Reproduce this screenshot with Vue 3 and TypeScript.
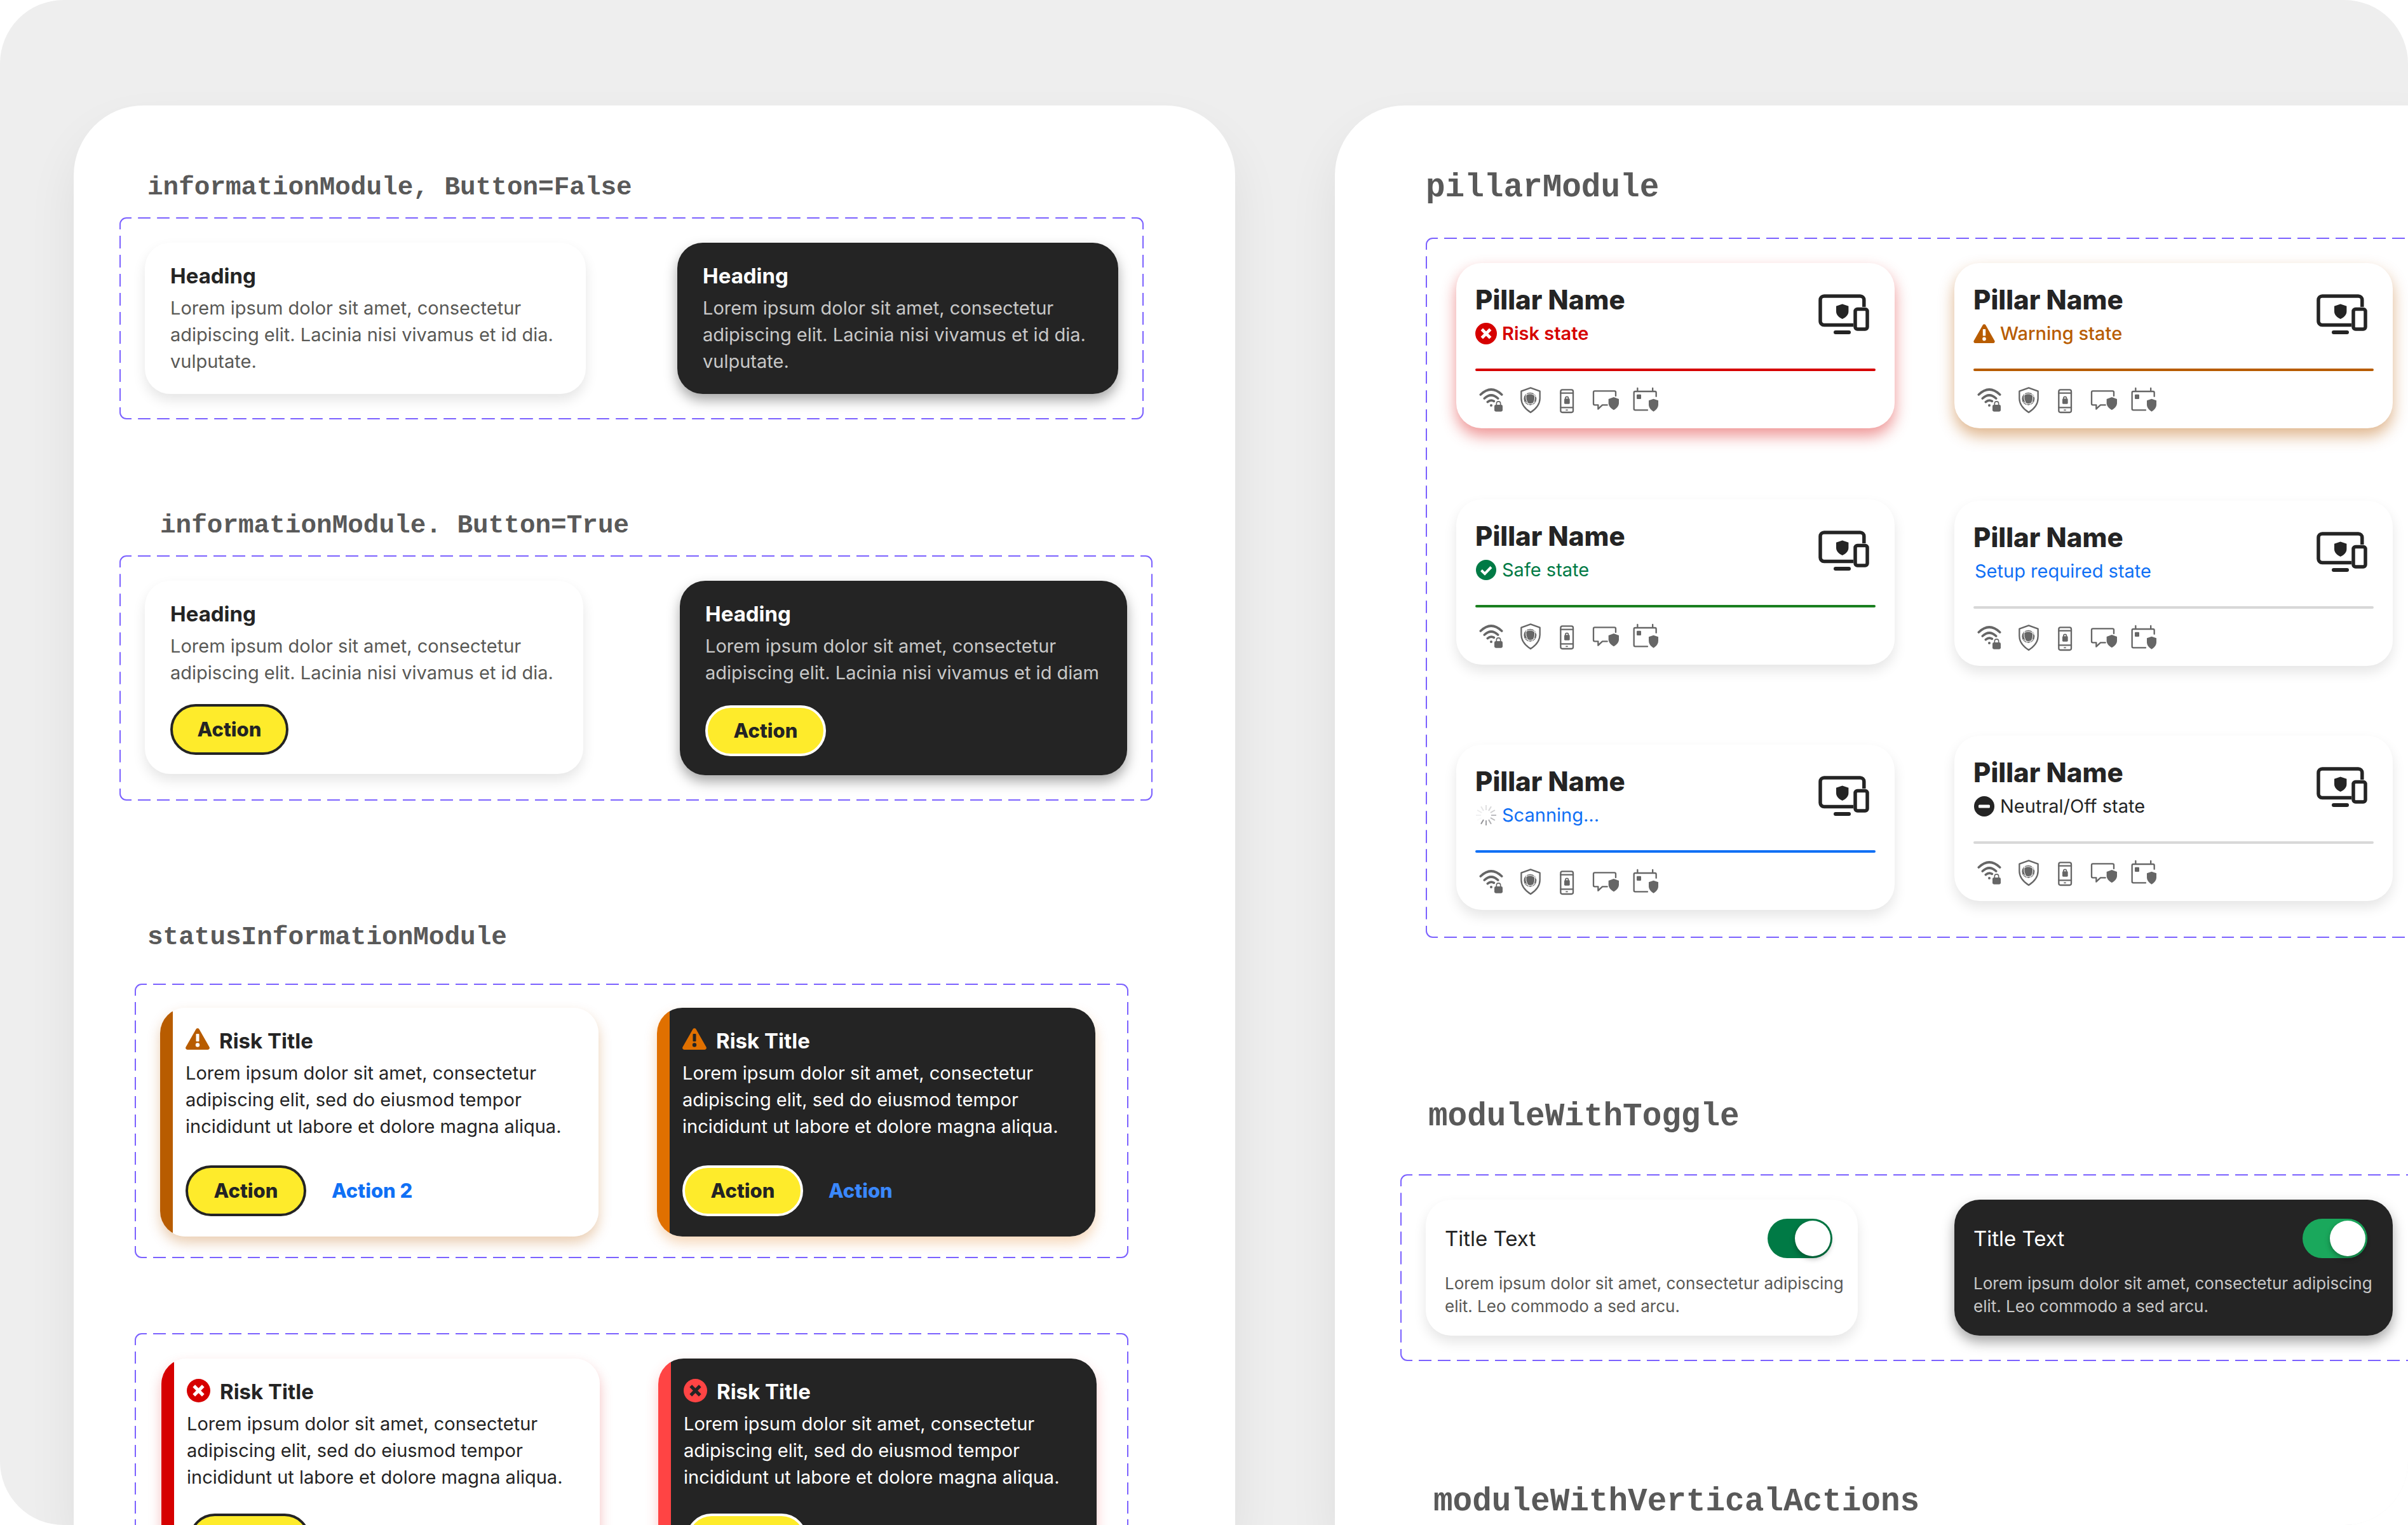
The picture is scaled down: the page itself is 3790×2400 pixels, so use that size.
<script setup lang="ts">
type Tone = 'light' | 'dark'
type PillarState = 'risk' | 'warning' | 'safe' | 'setup' | 'scanning' | 'neutral'

interface InfoCard { tone: Tone; text: string; action?: string }
interface StatusCard { tone: Tone; link: string }
interface Pillar { state: PillarState; label: string }

const plainCards: InfoCard[] = [
  { tone: 'light', text: 'Lorem ipsum dolor sit amet, consectetur\nadipiscing elit. Lacinia nisi vivamus et id dia.\nvulputate.' },
  { tone: 'dark', text: 'Lorem ipsum dolor sit amet, consectetur\nadipiscing elit. Lacinia nisi vivamus et id dia.\nvulputate.' },
]

const actionCards: InfoCard[] = [
  { tone: 'light', text: 'Lorem ipsum dolor sit amet, consectetur\nadipiscing elit. Lacinia nisi vivamus et id dia.', action: 'Action' },
  { tone: 'dark', text: 'Lorem ipsum dolor sit amet, consectetur\nadipiscing elit. Lacinia nisi vivamus et id diam', action: 'Action' },
]

const statusCards: StatusCard[] = [
  { tone: 'light', link: 'Action 2' },
  { tone: 'dark', link: 'Action' },
]

const statusKinds = ['warning', 'risk'] as const
const statusText = 'Lorem ipsum dolor sit amet, consectetur\nadipiscing elit, sed do eiusmod tempor\nincididunt ut labore et dolore magna aliqua.'

const pillarColumns: Pillar[][] = [
  [
    { state: 'risk', label: 'Risk state' },
    { state: 'safe', label: 'Safe state' },
    { state: 'scanning', label: 'Scanning...' },
  ],
  [
    { state: 'warning', label: 'Warning state' },
    { state: 'setup', label: 'Setup required state' },
    { state: 'neutral', label: 'Neutral/Off state' },
  ],
]

const toggleTones: Tone[] = ['light', 'dark']
const toggleText = 'Lorem ipsum dolor sit amet, consectetur adipiscing\nelit. Leo commodo a sed arcu.'

// Spoke opacities, clockwise from twelve o'clock
const spokes = [0.16, 0.2, 0.26, 0.34, 0.36, 0.42, 0.5, 0.55, 0.03, 0.07, 0.1, 0.13]
</script>

<template>
  <main class="board">
    <section class="panel panel-info">
      <h2 class="label">informationModule, Button=False</h2>
      <div class="frame frame-plain">
        <article v-for="card in plainCards" :key="card.tone" class="card info" :class="card.tone">
          <h3 class="card-title">Heading</h3>
          <p class="card-text">{{ card.text }}</p>
        </article>
      </div>

      <h2 class="label label-true">informationModule. Button=True</h2>
      <div class="frame frame-action">
        <article v-for="card in actionCards" :key="card.tone" class="card info with-action" :class="card.tone">
          <h3 class="card-title">Heading</h3>
          <p class="card-text">{{ card.text }}</p>
          <button type="button" class="pill">{{ card.action }}</button>
        </article>
      </div>

      <h2 class="label label-status">statusInformationModule</h2>
      <div v-for="kind in statusKinds" :key="kind" class="frame frame-status" :class="'frame-' + kind">
        <article v-for="card in statusCards" :key="card.tone" class="card status" :class="[card.tone, kind]">
          <h3 class="card-title">
            <svg v-if="kind === 'warning'" class="mark" width="38" height="34" viewBox="0 0 38 34" aria-hidden="true">
              <path class="solid" d="M16.6 1.5a2.8 2.8 0 0 1 4.8 0L37.5 29.8a2.8 2.8 0 0 1-2.4 4.2H2.9a2.8 2.8 0 0 1-2.4-4.2z" />
              <rect class="cut" x="16.5" y="9" width="5" height="12" rx="1" />
              <circle class="cut" cx="19" cy="26.5" r="3.2" />
            </svg>
            <svg v-else class="mark" width="37" height="37" viewBox="0 0 38 38" aria-hidden="true">
              <circle class="solid" cx="19" cy="19" r="19" />
              <path class="cut-line" d="M11.5 11.5l15 15M26.5 11.5l-15 15" />
            </svg>
            <span>Risk Title</span>
          </h3>
          <p class="card-text">{{ statusText }}</p>
          <div class="actions">
            <button type="button" class="pill">Action</button>
            <a href="#" class="text-link">{{ card.link }}</a>
          </div>
        </article>
      </div>
    </section>

    <section class="panel panel-pillars">
      <h2 class="label label-large">pillarModule</h2>
      <div class="frame frame-pillars">
        <div v-for="(column, c) in pillarColumns" :key="c" class="pillar-column">
          <article v-for="pillar in column" :key="pillar.state" class="card pillar" :class="pillar.state">
            <header class="pillar-head">
              <div>
                <h3 class="pillar-name">Pillar Name</h3>
                <p class="state">
                  <svg v-if="pillar.state === 'risk'" class="state-icon" width="34" height="34" viewBox="0 0 38 38" aria-hidden="true">
                    <circle class="solid" cx="19" cy="19" r="19" />
                    <path class="cut-line" d="M11.5 11.5l15 15M26.5 11.5l-15 15" />
                  </svg>
                  <svg v-else-if="pillar.state === 'warning'" class="state-icon" width="34" height="30" viewBox="0 0 38 34" aria-hidden="true">
                    <path class="solid" d="M16.6 1.5a2.8 2.8 0 0 1 4.8 0L37.5 29.8a2.8 2.8 0 0 1-2.4 4.2H2.9a2.8 2.8 0 0 1-2.4-4.2z" />
                    <rect class="cut" x="16.5" y="9" width="5" height="12" rx="1" />
                    <circle class="cut" cx="19" cy="26.5" r="3.2" />
                  </svg>
                  <svg v-else-if="pillar.state === 'safe'" class="state-icon" width="34" height="34" viewBox="0 0 34 34" aria-hidden="true">
                    <circle class="solid" cx="17" cy="17" r="16" />
                    <path class="check" d="M9.5 17.5l5.5 5.5 10-10.5" />
                  </svg>
                  <svg v-else-if="pillar.state === 'scanning'" class="state-icon" width="34" height="34" viewBox="0 0 34 34" aria-hidden="true">
                    <line
                      v-for="(opacity, i) in spokes"
                      :key="i"
                      class="spoke"
                      x1="17"
                      y1="1"
                      x2="17"
                      y2="9"
                      :stroke-opacity="opacity"
                      :transform="`rotate(${i * 30} 17 17)`"
                    />
                  </svg>
                  <svg v-else-if="pillar.state === 'neutral'" class="state-icon" width="34" height="34" viewBox="0 0 34 34" aria-hidden="true">
                    <circle class="solid" cx="17" cy="17" r="16" />
                    <rect class="cut" x="8" y="14.5" width="18" height="5" rx="1.5" />
                  </svg>
                  <span>{{ pillar.label }}</span>
                </p>
              </div>
              <svg class="devices" width="80" height="64" viewBox="0 0 80 64" aria-hidden="true">
                <path class="device-line" d="M71.8 20V9a6 6 0 0 0-6-6H9a6 6 0 0 0-6 6v33.500a6 6 0 0 0 6 6h46" />
                <rect class="device-line" x="58" y="23.500" width="19" height="31.500" rx="3.500" />
                <rect class="ink" x="24" y="57" width="27" height="6" rx="3" />
                <path class="ink" d="M37.700 15.500l9.700 3.200v8.300c0 6-4.500 9.500-9.700 12-5.200-2.500-9.700-6-9.700-12v-8.300z" />
              </svg>
            </header>
            <hr class="rule" />
            <div class="features">
              <svg class="feature" viewBox="33 36 150 132" aria-hidden="true">
                <path class="wave" d="M58 78Q108 30 158 78M76 96Q108 66 140 96M91 113Q106 100 121 109" />
                <circle class="grey" cx="108" cy="129" r="6" />
                <rect class="grey" x="123" y="126" width="39" height="32" rx="7" />
                <path class="thin" d="M133 128v-8a9.500 9.500 0 0 1 19 0v8" />
              </svg>
              <svg class="feature" viewBox="216 36 150 132" aria-hidden="true">
                <path class="outline" d="M294 46L250 62v34c0 32 22 52 44 66 22-14 44-34 44-66V62z" />
                <circle class="grey" cx="292" cy="98" r="30" />
                <path class="vein" d="M276 70Q264 100 288 129M272 80Q298 64 322 90M310 72Q322 104 298 129M268 112Q292 132 316 112" />
                <path class="grey" d="M296 80C306 87 311 98 307 107Q294 117 281 107C277 97 284 87 296 80z" />
              </svg>
              <svg class="feature" viewBox="399 36 150 132" aria-hidden="true">
                <rect class="outline" x="436" y="55" width="59" height="107" rx="8" />
                <path class="outline" d="M436 71h59M436 139h59" />
                <path class="thin" d="M460 151h10" />
                <rect class="grey" x="453" y="97" width="26" height="25" rx="4" />
                <path class="thin" d="M458.500 99v-4a7 7 0 0 1 14 0v4" />
              </svg>
              <svg class="feature" viewBox="582 36 150 132" aria-hidden="true">
                <path class="outline" d="M696 84V67a6 6 0 0 0-6-6h-93a6 6 0 0 0-6 6v54a6 6 0 0 0 6 6h16v19l20-19h23" />
                <path class="grey" d="M686.500 90l24.500 9v19c0 15-12 26-24.500 33-12.500-7-24.500-18-24.500-33V99z" />
              </svg>
              <svg class="feature" viewBox="765 36 150 132" aria-hidden="true">
                <path class="outline" d="M887 86V69a6 6 0 0 0-6-6h-93a6 6 0 0 0-6 6v76a6 6 0 0 0 6 6h58M799 48v14M870.500 48v14" />
                <rect class="grey" x="795" y="77" width="21" height="22" rx="4" />
                <path class="grey" d="M874.500 98l22.500 8v19c0 15-11 26-22.500 33-11.500-7-22.500-18-22.500-33v-19z" />
              </svg>
            </div>
          </article>
        </div>
      </div>

      <h2 class="label label-large label-toggle">moduleWithToggle</h2>
      <div class="frame frame-toggle">
        <article v-for="tone in toggleTones" :key="tone" class="card toggle" :class="tone">
          <div class="toggle-row">
            <label class="toggle-title" :for="'switch-' + tone">Title Text</label>
            <input :id="'switch-' + tone" class="switch" type="checkbox" role="switch" checked />
          </div>
          <p class="toggle-text">{{ toggleText }}</p>
        </article>
      </div>

      <h2 class="label label-large label-vertical">moduleWithVerticalActions</h2>
    </section>
  </main>
</template>

<style>
body {
  margin: 0;
  background: #fff;
}
</style>

<style scoped>
.board {
  box-sizing: border-box;
  display: flex;
  gap: 157px;
  height: 100vh;
  padding: 166px 0 0 116px;
  border-radius: 100px;
  overflow: hidden;
  background: #eee;
  color: #242424;
  font-family: Inter, "Liberation Sans", sans-serif;
}

.panel {
  box-sizing: border-box;
  min-width: 0;
  padding-top: 104px;
  border-radius: 110px 110px 0 0;
  background: #fff;
  box-shadow: 0 40px 80px rgba(0, 0, 0, 0.07);
}
/* The grow factors share what is left after the panels' side padding */
.panel-info {
  flex: 1756 1 0;
  padding-left: 72px;
}
.panel-pillars {
  flex: 1706 1 0;
  margin-right: -120px;
  padding-top: 100px;
  padding-left: 103px;
}

h2,
h3,
p {
  margin: 0;
}

.label {
  padding-left: 44px;
  color: #595959;
  font: 700 41px/50px "Liberation Mono", monospace;
  white-space: nowrap;
}
.label-true {
  margin-top: 142px;
  padding-left: 64px;
}
.label-status {
  margin-top: 190px;
}
.label-large {
  padding-left: 40px;
  font-size: 51px;
  line-height: 60px;
}
.label-toggle {
  margin-top: 252px;
  padding-left: 44px;
}
.label-vertical {
  margin-top: 192px;
  padding-left: 52px;
}

.frame {
  box-sizing: border-box;
  display: flex;
  align-items: flex-start;
  width: max-content;
  margin-top: 22px;
  padding: 38px;
  border: 2px solid transparent;
  border-image: url("data:image/svg+xml,%3Csvg xmlns='http://www.w3.org/2000/svg' width='78' height='78' fill='none' stroke='%237b61ff' stroke-width='2'%3E%3Cpath d='M1 19V11A10 10 0 0 1 11 1H19M29 1H49M59 1H67A10 10 0 0 1 77 11V19M77 29V49M77 59V67A10 10 0 0 1 67 77H59M49 77H29M19 77H11A10 10 0 0 1 1 67V59M1 49V29'/%3E%3C/svg%3E") 24 / 24px round;
}
.frame-plain {
  gap: 144px;
}
.frame-action {
  gap: 152px;
}
.frame-status {
  gap: 92px;
  margin-left: 24px;
}
.frame-warning {
  margin-top: 48px;
  padding: 36px 50px 32px 38px;
}
.frame-risk {
  margin-top: 118px;
  padding: 38px 48px 32px 40px;
}
.frame-pillars {
  gap: 94px;
  margin-top: 48px;
  margin-left: 40px;
  padding: 38px 46px 42px;
}
.frame-toggle {
  gap: 152px;
  margin-top: 60px;
}

.card {
  box-sizing: border-box;
  border-radius: 40px;
  background: #fff;
  box-shadow: 0 10px 20px rgba(0, 0, 0, 0.1);
  --cut: #fff;
}
.card.dark {
  background: #242424;
  color: #fff;
  box-shadow: 0 10px 20px rgba(0, 0, 0, 0.35);
  --cut: #242424;
}

.card-title {
  display: flex;
  gap: 15px;
  font-size: 33px;
  font-weight: 700;
  line-height: 40px;
}
.card-text {
  margin-top: 10px;
  font-size: 29px;
  line-height: 42px;
  white-space: pre;
}

.info {
  width: 694px;
  padding: 32px 40px 30px;
}
.info .card-text {
  color: #595956;
}
.info.dark .card-text {
  color: #c8c8c8;
}
.with-action {
  width: 690px;
}
.with-action.dark {
  width: 704px;
}
.with-action .pill {
  display: block;
  margin-top: 28px;
}
.with-action.dark .pill {
  margin-top: 30px;
}

.pill {
  box-sizing: border-box;
  width: 190px;
  height: 80px;
  padding: 0;
  border: 4px solid #242424;
  border-radius: 40px;
  background: #feeb2b;
  color: #242424;
  font: 800 31px/40px Inter, "Liberation Sans", sans-serif;
}
.dark .pill {
  border-color: #fff;
}
.with-action.light .pill {
  width: 186px;
}

.status {
  width: 690px;
  padding: 32px 40px;
}
.status.warning {
  --accent: #b85c00;
  background: linear-gradient(to right, var(--accent) 20px, #fff 20px);
  box-shadow: 0 10px 20px rgba(184, 92, 0, 0.3);
}
.status.warning.dark {
  --accent: #e07000;
  background: linear-gradient(to right, var(--accent) 20px, #242424 20px);
  box-shadow: 0 10px 20px rgba(224, 112, 0, 0.28);
}
.status.risk {
  --accent: #d60000;
  background: linear-gradient(to right, var(--accent) 20px, #fff 20px);
  box-shadow: 0 10px 20px rgba(214, 0, 0, 0.25);
}
.status.risk.dark {
  --accent: #ff4444;
  background: linear-gradient(to right, var(--accent) 20px, #242424 20px);
  box-shadow: 0 10px 20px rgba(255, 68, 68, 0.28);
}
.actions {
  display: flex;
  align-items: center;
  gap: 40px;
  margin-top: 40px;
}
.status.risk .actions {
  margin-top: 36px;
  padding-left: 4px;
}
.text-link {
  color: #1070f5;
  font-size: 31px;
  font-weight: 800;
  line-height: 40px;
  text-decoration: none;
}
.dark .text-link {
  color: #3a88fd;
}

.mark,
.state-icon,
.devices {
  flex: none;
}
.solid {
  fill: var(--accent);
}
.cut {
  fill: var(--cut);
}
.cut-line {
  fill: none;
  stroke: var(--cut);
  stroke-width: 5.5;
}
.check {
  fill: none;
  stroke: #fff;
  stroke-width: 4;
}
.spoke {
  stroke: #3c3c43;
  stroke-width: 2;
}

.pillar {
  width: 690px;
  height: 260px;
  padding: 32px 30px 0;
}
.pillar + .pillar {
  margin-top: 112px;
}
.pillar + .pillar.setup {
  margin-top: 114px;
}
.pillar + .pillar.scanning {
  margin-top: 126px;
}
.pillar + .pillar.neutral {
  margin-top: 110px;
}
.pillar.risk {
  --accent: #d60000;
  --rule: #d60000;
  box-shadow: 0 12px 24px rgba(214, 0, 0, 0.42);
}
.pillar.warning {
  --accent: #b85c00;
  --rule: #b85c00;
  box-shadow: 0 12px 24px rgba(184, 92, 0, 0.45);
}
.pillar.safe {
  --accent: #007a45;
  --rule: #1a7f1f;
}
.pillar.setup {
  --accent: #1070f5;
  --rule: #d8d8d8;
}
.pillar.scanning {
  --accent: #1070f5;
  --rule: #1070f5;
}
.pillar.neutral {
  --accent: #242424;
  --rule: #d8d8d8;
}
.pillar-head {
  display: flex;
  justify-content: space-between;
  height: 134px;
  padding-right: 10px;
}
.pillar-name {
  font-size: 42px;
  font-weight: 800;
  line-height: 52px;
}
.state {
  display: flex;
  align-items: center;
  gap: 8px;
  height: 40px;
  margin-top: 7px;
  color: var(--accent);
  font-size: 29px;
  line-height: 40px;
}
.risk .state {
  font-weight: 600;
}
.warning .state {
  font-weight: 500;
}
.safe .state {
  font-weight: 400;
}
.setup .state {
  padding-left: 2px;
}
.devices {
  margin-top: 17px;
}
.device-line {
  fill: none;
  stroke: #242424;
  stroke-width: 5.5;
}
.ink {
  fill: #242424;
}
.rule {
  height: 4px;
  margin: 0;
  border: 0;
  border-radius: 2px;
  background: var(--rule);
}
.features {
  display: flex;
  gap: 11px;
  margin-top: 23px;
}
.feature {
  width: 50px;
  height: 44px;
}
.grey {
  fill: #666;
}
.wave {
  fill: none;
  stroke: #666;
  stroke-width: 11;
  stroke-linecap: round;
}
.outline {
  fill: none;
  stroke: #666;
  stroke-width: 7;
  stroke-linejoin: round;
  stroke-linecap: round;
}
.thin {
  fill: none;
  stroke: #666;
  stroke-width: 5;
}
.vein {
  fill: none;
  stroke: #fff;
  stroke-width: 3;
}

.toggle {
  width: 690px;
  padding: 30px 30px 28px;
}
.toggle.light {
  width: 680px;
}
.toggle-row {
  display: flex;
  align-items: center;
  justify-content: space-between;
  padding-right: 10px;
}
.toggle-title {
  font-size: 33px;
  font-weight: 400;
  line-height: 44px;
}
.switch {
  appearance: none;
  display: flex;
  align-items: center;
  justify-content: flex-end;
  box-sizing: border-box;
  width: 102px;
  height: 62px;
  margin: 0;
  padding: 3px;
  border-radius: 31px;
  background: #007a45;
}
.dark .switch {
  background: #1aa85c;
}
.switch::before {
  content: "";
  width: 56px;
  height: 56px;
  border-radius: 50%;
  background: #fff;
  box-shadow: 0 4px 8px rgba(0, 0, 0, 0.3);
}
.toggle-text {
  margin-top: 22px;
  color: #595956;
  font-size: 26px;
  line-height: 36px;
  white-space: pre;
}
.dark .toggle-text {
  color: #c8c8c8;
}
</style>
